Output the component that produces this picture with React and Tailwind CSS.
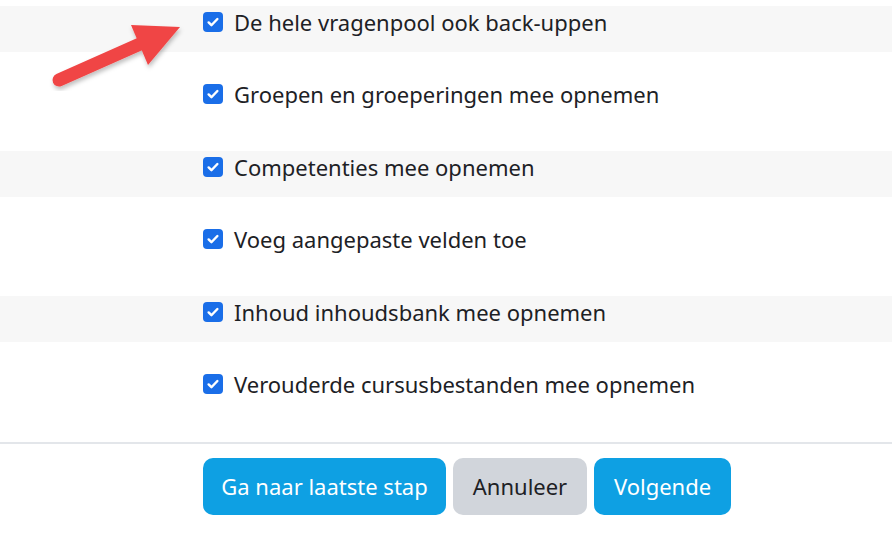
import React from "react";

const items = [
  "De hele vragenpool ook back-uppen",
  "Groepen en groeperingen mee opnemen",
  "Competenties mee opnemen",
  "Voeg aangepaste velden toe",
  "Inhoud inhoudsbank mee opnemen",
  "Verouderde cursusbestanden mee opnemen",
];

function Check() {
  return (
    <div className="w-[20px] h-[20px] rounded-[4px] bg-[#1a6ee8] flex items-center justify-center shrink-0">
      <svg width="14" height="14" viewBox="0 0 16 16">
        <path d="M3 8.5l3.2 3.2L13 4.6" fill="none" stroke="white" strokeWidth="2.8" strokeLinecap="round" strokeLinejoin="round" />
      </svg>
    </div>
  );
}

export default function App() {
  return (
    <div className="relative w-[892px] h-[534px] bg-white overflow-hidden" style={{ fontFamily: '"Noto Sans", "Open Sans", sans-serif' }}>
      <div className="pt-[6px] flex flex-col gap-[26.6px]">
        {items.map((t, i) => (
          <div key={i} className={"h-[46px] pl-[203px] pt-[5px] flex items-start " + (i % 2 === 0 ? "bg-[#f7f7f7]" : "bg-white")}>
            <div className="flex items-center gap-[11px] h-[21px]">
              <Check />
              <span className="text-[22px] text-[#1d2125] leading-none whitespace-nowrap">{t}</span>
            </div>
          </div>
        ))}
      </div>
      <div className="mt-[27px] border-t-2 border-[#e3e6ea]" />
      <div className="pl-[203px] pt-[14px] flex gap-[7px]">
        <button className="h-[57px] w-[243px] rounded-[10px] bg-[#0ea0e3] text-white text-[22px]">Ga naar laatste stap</button>
        <button className="h-[57px] w-[134px] rounded-[10px] bg-[#d1d5db] text-[#1d2125] text-[22px]">Annuleer</button>
        <button className="h-[57px] w-[137px] rounded-[10px] bg-[#0ea0e3] text-white text-[22px]">Volgende</button>
      </div>
      <svg className="absolute left-0 top-0" width="200" height="100" viewBox="0 0 200 100">
        <defs>
          <filter id="sh" x="-20%" y="-20%" width="140%" height="140%">
            <feDropShadow dx="1" dy="3" stdDeviation="2" floodColor="#000" floodOpacity="0.25" />
          </filter>
        </defs>
        <g filter="url(#sh)">
          <line x1="59" y1="80" x2="140" y2="44" stroke="#f04545" strokeWidth="13" strokeLinecap="round" />
          <polygon points="180,27 131,25 148,65" fill="#f04545" />
        </g>
      </svg>
    </div>
  );
}
